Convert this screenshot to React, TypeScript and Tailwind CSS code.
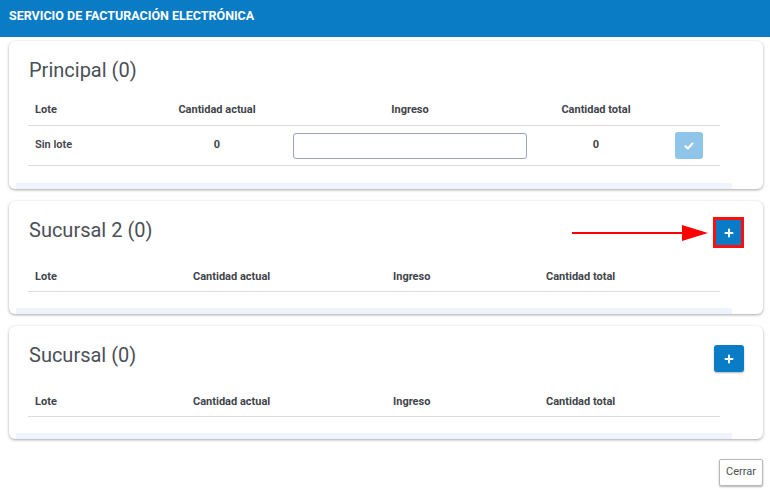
import React from 'react';

const Plus: React.FC = () => (
  <svg width="10" height="10" viewBox="0 0 10 10" fill="none">
    <path d="M5 1.5v7M1.5 5h7" stroke="white" strokeWidth="2" strokeLinecap="round" />
  </svg>
);

const Check: React.FC = () => (
  <svg width="10" height="8" viewBox="0 0 10 8" fill="none">
    <path d="M1.5 4.2l2.4 2.3L8.5 1.5" stroke="white" strokeWidth="2" strokeLinecap="round" strokeLinejoin="round" />
  </svg>
);

const headCell = 'text-[11px] font-bold text-[#3f444b]';

const EmptyTable: React.FC = () => (
  <div className="ml-[19px] w-[692px]">
    <div className="grid grid-cols-[157px_200px_153px_182px] h-[30px] pt-[2px] items-center border-b border-[#dcdcdc]">
      <div className={`${headCell} pl-[7px]`}>Lote</div>
      <div className={`${headCell} pl-[8px]`}>Cantidad actual</div>
      <div className={`${headCell} pl-[8px]`}>Ingreso</div>
      <div className={`${headCell} pl-[8px]`}>Cantidad total</div>
    </div>
  </div>
);

const ScrollBar: React.FC<{ gap?: string }> = ({ gap = 'mt-[17px]' }) => (
  <div className={`${gap} ml-[7px] w-[716px] h-[6px] bg-[#eef3fc]`} />
);

const Card: React.FC<{ children: React.ReactNode }> = ({ children }) => (
  <div className="bg-white rounded-[6px] shadow-[0_1px_3px_rgba(0,0,0,0.35)] pt-[15px] overflow-hidden">
    {children}
  </div>
);

const App: React.FC = () => {
  return (
    <div className="w-[770px] h-[497px] bg-white font-['Roboto','Liberation_Sans',sans-serif]">
      <div className="h-[37px] bg-[#0a7cc6] flex items-center pl-[9px] pb-[5px]">
        <span className="text-white text-[12.5px] font-bold">SERVICIO DE FACTURACIÓN ELECTRÓNICA</span>
      </div>

      <div className="pl-[9px] pr-[7px] pt-[4px] flex flex-col gap-[12px]">
        <Card>
          <h2 className="pl-[20px] h-[28px] leading-[28px] text-[20px] text-[#4a5058]">Principal (0)</h2>
          <div className="ml-[19px] mt-[12px] w-[692px]">
            <div className="grid grid-cols-[121px_136px_250px_122px_63px] h-[30px] items-center border-b border-[#dcdcdc]">
              <div className={`${headCell} pl-[7px]`}>Lote</div>
              <div className={`${headCell} text-center`}>Cantidad actual</div>
              <div className={`${headCell} text-center`}>Ingreso</div>
              <div className={`${headCell} text-center`}>Cantidad total</div>
              <div />
            </div>
            <div className="grid grid-cols-[121px_136px_250px_122px_63px] h-[40px] items-center border-b border-[#dcdcdc]">
              <div className={`${headCell} pl-[7px] font-semibold`}>Sin lote</div>
              <div className={`${headCell} text-center`}>0</div>
              <div className="px-[8px]">
                <input className="w-[234px] h-[26px] border border-[#9aa3b0] rounded-[3px] outline-none" />
              </div>
              <div className={`${headCell} text-center`}>0</div>
              <div className="flex justify-center">
                <button className="w-[28px] h-[27px] rounded-[3px] bg-[#8ec5e9] flex items-center justify-center">
                  <Check />
                </button>
              </div>
            </div>
          </div>
          <ScrollBar />
        </Card>

        <Card>
          <div className="relative flex items-start justify-between h-[31px] pl-[20px] pr-[19px]">
            <h2 className="h-[28px] leading-[28px] text-[20px] text-[#4a5058]">Sucursal 2 (0)</h2>
            <div className="absolute left-[563px] top-[9px] flex items-center">
              <div className="w-[112px] h-[2px] bg-[#ff0000]" />
              <div className="w-0 h-0 border-y-[8px] border-y-transparent border-l-[26px] border-l-[#ff0000] -ml-[2px]" />
            </div>
            <button className="mt-[1px] w-[31px] h-[31px] border-[3px] border-[#ff1010] bg-[#0a7cc6] flex items-center justify-center">
              <Plus />
            </button>
          </div>
          <div className="mt-[15px]">
            <EmptyTable />
          </div>
          <ScrollBar gap="mt-[16px]" />
        </Card>

        <Card>
          <div className="flex items-start justify-between h-[31px] pl-[20px] pr-[19px]">
            <h2 className="h-[28px] leading-[28px] text-[20px] text-[#4a5058]">Sucursal (0)</h2>
            <button className="mt-[4px] w-[30px] h-[27px] rounded-[3px] bg-[#0a7cc6] shadow-[0_1px_2px_rgba(0,0,0,0.3)] flex items-center justify-center">
              <Plus />
            </button>
          </div>
          <div className="mt-[15px]">
            <EmptyTable />
          </div>
          <ScrollBar gap="mt-[16px]" />
        </Card>
      </div>

      <div className="flex justify-end pr-[7px] mt-[20px]">
        <button className="w-[44px] h-[27px] bg-white border border-[#b5b8bc] rounded-[2px] shadow-[0_1px_2px_rgba(0,0,0,0.3)] text-[11px] text-[#4a4f55]">
          Cerrar
        </button>
      </div>
    </div>
  );
};

export default App;
